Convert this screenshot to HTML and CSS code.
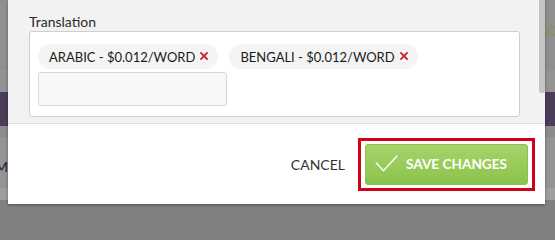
FILE: index.html
```html
<!DOCTYPE html>
<html>
<head>
<meta charset="utf-8">
<link rel="stylesheet" href="styles.css">
</head>
<body>
<div class="page">
  <div class="bg-left"><span>M</span></div>
  <div class="bg-right"><span>O</span></div>
  <div class="modal">
    <div class="modal-body">
      <div class="field-label">Translation</div>
      <div class="tag-box">
        <div class="tags">
          <span class="tag">ARABIC - $0.012/WORD<svg class="x" width="8" height="8" viewBox="0 0 8 8"><path d="M1 1L7 7M7 1L1 7" stroke="#c9252f" stroke-width="1.8" stroke-linecap="square"/></svg></span>
          <span class="tag">BENGALI - $0.012/WORD<svg class="x" width="8" height="8" viewBox="0 0 8 8"><path d="M1 1L7 7M7 1L1 7" stroke="#c9252f" stroke-width="1.8" stroke-linecap="square"/></svg></span>
        </div>
        <div class="tag-input"></div>
      </div>
      <div class="scroll-thumb"></div>
    </div>
    <div class="modal-footer">
      <span class="cancel">CANCEL</span>
      <div class="highlight">
        <button class="save"><svg width="23" height="17" viewBox="0 0 23 17"><path d="M0.8 7.5L8.5 15.8L22.2 0.8" fill="none" stroke="#fff" stroke-width="1.4"/></svg><span>SAVE CHANGES</span></button>
      </div>
    </div>
  </div>
</div>
</body>
</html>
```
FILE: styles.css
```css
html, body {
  margin: 0;
  padding: 0;
}
html {
  background: #808080;
}
body {
  width: 555px;
  height: 213px;
  overflow: hidden;
  font-family: Lato, "Open Sans", sans-serif;
}
.page {
  position: relative;
  height: 213px;
  overflow: hidden;
  background: linear-gradient(to bottom,
    #8f8f8f 0px, #8f8f8f 70px,
    #939393 70px, #939393 92px,
    #4b3c59 92px, #4b3c59 126px,
    #8c8c8c 126px, #8c8c8c 137px,
    #949494 137px, #949494 188px,
    #9e9e9e 188px, #9e9e9e 200px,
    #808080 200px, #808080 213px);
}
.bg-left {
  position: absolute;
  left: 0;
  top: 158px;
  width: 8px;
  overflow: hidden;
  font-size: 14px;
  color: #1c2140;
  direction: rtl;
}
.bg-right {
  position: absolute;
  left: 547px;
  top: 22px;
  width: 8px;
  overflow: hidden;
  font-size: 14px;
  color: #7f9a3f;
}
.modal {
  position: relative;
  margin-left: 8px;
  width: 537px;
  height: 204px;
  background: #fff;
  box-shadow: 0 1px 3px rgba(0,0,0,0.35);
  display: flex;
  flex-direction: column;
}
.modal-body {
  position: relative;
  height: 124px;
  box-sizing: border-box;
  background: #f2f2f2;
  border-bottom: 1px solid #dedede;
  padding: 13px 0 0 21px;
}
.field-label {
  font-size: 14px;
  line-height: 17px;
  color: #2b2b2b;
  margin-bottom: 1px;
}
.tag-box {
  width: 491px;
  height: 86px;
  box-sizing: border-box;
  background: #fff;
  border: 1px solid #cfcfcf;
  border-radius: 3px;
  padding: 12px 8px 0 8px;
}
.tags {
  display: flex;
  gap: 11px;
}
.tag {
  display: inline-flex;
  align-items: center;
  height: 25px;
  padding: 0 10px 0 11px;
  border-radius: 13px;
  background: #f4f4f4;
  font-size: 13px;
  color: #1a1a1a;
  white-space: pre;
}
.x {
  margin-left: 5px;
  margin-top: -2px;
}
.tag-input {
  margin-top: 3px;
  width: 189px;
  height: 34px;
  box-sizing: border-box;
  background: #f7f7f7;
  border: 1px solid #d8d8d8;
  border-radius: 3px;
}
.scroll-thumb {
  position: absolute;
  right: 0;
  top: 0;
  width: 6px;
  height: 93px;
  background: #c4c4c4;
  border-radius: 0 0 3px 3px;
}
.modal-footer {
  flex: 1;
  display: flex;
  align-items: center;
  justify-content: flex-end;
  padding-right: 10px;
}
.cancel {
  font-size: 14px;
  color: #333;
  margin-right: 13px;
}
.highlight {
  border: 3px solid #d0021b;
  padding: 3px 4px;
  background: #fff;
}
.save {
  display: flex;
  align-items: center;
  width: 163px;
  height: 41px;
  box-sizing: border-box;
  border: 1px solid #8dbf52;
  border-radius: 3px;
  background: linear-gradient(to bottom, #a6d46c, #8cc34b);
  padding: 0 0 0 9px;
  font-family: Lato, sans-serif;
  font-size: 13.6px;
  font-weight: 700;
  color: #fff;
  cursor: pointer;
}
.save svg {
  margin-right: 8px;
  margin-top: -1px;
}
```
